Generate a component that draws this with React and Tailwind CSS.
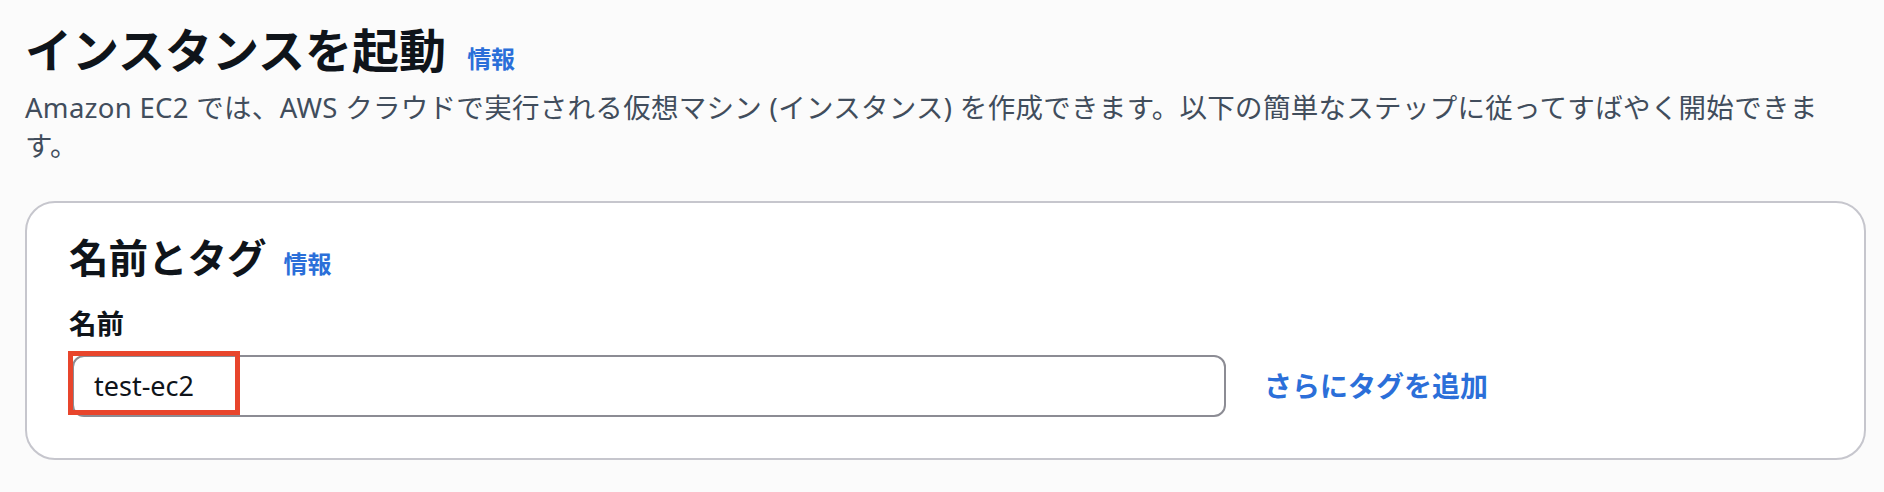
import React from "react";

const font = { fontFamily: '"Noto Sans", "Noto Sans CJK JP", sans-serif' };

export default function App() {
  return (
    <div
      className="min-h-screen w-full bg-[#fbfbfb] pl-[25px] pr-[18px] pt-[21px] pb-[30px]"
      style={font}
    >
      <div className="flex items-baseline">
        <h1 className="text-[47px] leading-[58px] font-bold text-[#0f141a]">
          インスタンスを起動
        </h1>
        <a className="ml-[21px] text-[24px] font-bold text-[#2b6fd9] cursor-pointer">
          情報
        </a>
      </div>
      <p className="mt-[10px] w-[1810px] text-[27.5px] leading-[38px] tracking-[0.3px] text-[#414d5c]">
        Amazon EC2 では、AWS クラウドで実行される仮想マシン (インスタンス) を作成できます。以下の簡単なステップに従ってすばやく開始できます。
      </p>
      <div className="mt-[36px] rounded-[30px] border-2 border-[#c6c6cd] bg-white pl-[42px] pr-[40px] pt-[30px] pb-[41px]">
        <div className="flex items-baseline">
          <h2 className="text-[39.5px] leading-[50px] font-bold text-[#0f141a]">
            名前とタグ
          </h2>
          <a className="ml-[17px] text-[24px] font-bold text-[#2b6fd9] cursor-pointer">
            情報
          </a>
        </div>
        <div className="mt-[23px] text-[27.5px] leading-[36px] font-bold text-[#0f141a]">
          名前
        </div>
        <div className="mt-[13px] flex items-center">
          <div className="relative ml-[3px] w-[1154px] h-[62px] rounded-[12px] border-2 border-[#8c8c94] bg-white flex items-center pl-[20px] text-[27px] text-[#0f141a]">
            test-ec2
            <div className="absolute -left-[6px] -top-[6px] w-[172px] h-[64px] border-[5px] border-[#e8452c]" />
          </div>
          <a className="ml-[38px] text-[28px] font-bold text-[#2b6fd9] cursor-pointer">
            さらにタグを追加
          </a>
        </div>
      </div>
    </div>
  );
}
